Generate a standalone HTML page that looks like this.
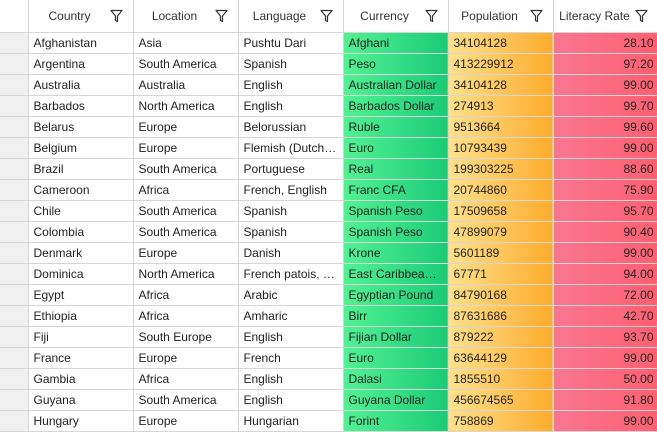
<!DOCTYPE html>
<html><head><style>
*{margin:0;padding:0;box-sizing:border-box}
body{width:657px;height:430px;overflow:hidden;background:#fff;font-family:"Liberation Sans",sans-serif;font-size:12px;color:#222}
table{border-collapse:collapse;table-layout:fixed;position:absolute;left:0;top:0;width:680px}
td,th{border:1px solid #d6d6d6;height:21px;padding:0 5px;white-space:nowrap;overflow:hidden;text-overflow:ellipsis;font-weight:normal;text-align:left}
th{height:32px;position:relative;color:#333;border-top:none}
th span{position:absolute;left:0;right:22px;text-align:center;top:9px}
th svg{position:absolute;right:10px;top:9px}
td:first-child,th:first-child{background:#f0f0f0;border-left:none;padding:0}
th:first-child{background:#fff}
tr td:nth-child(5){background:linear-gradient(90deg,#52f293,#1ccb77)}
tr td:nth-child(6){background:linear-gradient(90deg,#fee18c,#fdac2d)}
tr td:nth-child(7){background:linear-gradient(90deg,#f87790,#ff5a6a);text-align:right;padding-right:4px}
</style></head><body>
<table>
<colgroup><col style="width:28px"><col style="width:105px"><col style="width:105px"><col style="width:105px"><col style="width:105px"><col style="width:105px"><col style="width:127px"></colgroup>
<tr><th></th>
<th><span>Country</span><svg width="13" height="14" viewBox="0 0 13 14"><path d="M1 1.5H12L7.5 7V12.5L5.5 11.5V7Z" fill="none" stroke="#333" stroke-width="1.2" stroke-linejoin="round"/></svg></th>
<th><span>Location</span><svg width="13" height="14" viewBox="0 0 13 14"><path d="M1 1.5H12L7.5 7V12.5L5.5 11.5V7Z" fill="none" stroke="#333" stroke-width="1.2" stroke-linejoin="round"/></svg></th>
<th><span>Language</span><svg width="13" height="14" viewBox="0 0 13 14"><path d="M1 1.5H12L7.5 7V12.5L5.5 11.5V7Z" fill="none" stroke="#333" stroke-width="1.2" stroke-linejoin="round"/></svg></th>
<th><span>Currency</span><svg width="13" height="14" viewBox="0 0 13 14"><path d="M1 1.5H12L7.5 7V12.5L5.5 11.5V7Z" fill="none" stroke="#333" stroke-width="1.2" stroke-linejoin="round"/></svg></th>
<th><span>Population</span><svg width="13" height="14" viewBox="0 0 13 14"><path d="M1 1.5H12L7.5 7V12.5L5.5 11.5V7Z" fill="none" stroke="#333" stroke-width="1.2" stroke-linejoin="round"/></svg></th>
<th><span style="right:44px">Literacy Rate</span><svg style="right:32px" width="13" height="14" viewBox="0 0 13 14"><path d="M1 1.5H12L7.5 7V12.5L5.5 11.5V7Z" fill="none" stroke="#333" stroke-width="1.2" stroke-linejoin="round"/></svg></th></tr>
<tr><td></td><td>Afghanistan</td><td>Asia</td><td>Pushtu Dari</td><td>Afghani</td><td>34104128</td><td style="padding-right:26px">28.10</td></tr>
<tr><td></td><td>Argentina</td><td>South America</td><td>Spanish</td><td>Peso</td><td>413229912</td><td style="padding-right:26px">97.20</td></tr>
<tr><td></td><td>Australia</td><td>Australia</td><td>English</td><td>Australian Dollar</td><td>34104128</td><td style="padding-right:26px">99.00</td></tr>
<tr><td></td><td>Barbados</td><td>North America</td><td>English</td><td>Barbados Dollar</td><td>274913</td><td style="padding-right:26px">99.70</td></tr>
<tr><td></td><td>Belarus</td><td>Europe</td><td>Belorussian</td><td>Ruble</td><td>9513664</td><td style="padding-right:26px">99.60</td></tr>
<tr><td></td><td>Belgium</td><td>Europe</td><td>Flemish (Dutch), French</td><td>Euro</td><td>10793439</td><td style="padding-right:26px">99.00</td></tr>
<tr><td></td><td>Brazil</td><td>South America</td><td>Portuguese</td><td>Real</td><td>199303225</td><td style="padding-right:26px">88.60</td></tr>
<tr><td></td><td>Cameroon</td><td>Africa</td><td>French, English</td><td>Franc CFA</td><td>20744860</td><td style="padding-right:26px">75.90</td></tr>
<tr><td></td><td>Chile</td><td>South America</td><td>Spanish</td><td>Spanish Peso</td><td>17509658</td><td style="padding-right:26px">95.70</td></tr>
<tr><td></td><td>Colombia</td><td>South America</td><td>Spanish</td><td>Spanish Peso</td><td>47899079</td><td style="padding-right:26px">90.40</td></tr>
<tr><td></td><td>Denmark</td><td>Europe</td><td>Danish</td><td>Krone</td><td>5601189</td><td style="padding-right:26px">99.00</td></tr>
<tr><td></td><td>Dominica</td><td>North America</td><td>French patois, English</td><td>East Caribbean Dollar</td><td>67771</td><td style="padding-right:26px">94.00</td></tr>
<tr><td></td><td>Egypt</td><td>Africa</td><td>Arabic</td><td>Egyptian Pound</td><td>84790168</td><td style="padding-right:26px">72.00</td></tr>
<tr><td></td><td>Ethiopia</td><td>Africa</td><td>Amharic</td><td>Birr</td><td>87631686</td><td style="padding-right:26px">42.70</td></tr>
<tr><td></td><td>Fiji</td><td>South Europe</td><td>English</td><td>Fijian Dollar</td><td>879222</td><td style="padding-right:26px">93.70</td></tr>
<tr><td></td><td>France</td><td>Europe</td><td>French</td><td>Euro</td><td>63644129</td><td style="padding-right:26px">99.00</td></tr>
<tr><td></td><td>Gambia</td><td>Africa</td><td>English</td><td>Dalasi</td><td>1855510</td><td style="padding-right:26px">50.00</td></tr>
<tr><td></td><td>Guyana</td><td>South America</td><td>English</td><td>Guyana Dollar</td><td>456674565</td><td style="padding-right:26px">91.80</td></tr>
<tr><td></td><td>Hungary</td><td>Europe</td><td>Hungarian</td><td>Forint</td><td>758869</td><td style="padding-right:26px">99.00</td></tr>
</table>
</body></html>
